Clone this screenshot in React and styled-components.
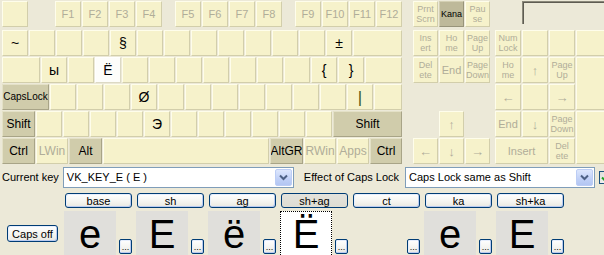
import React from "react";
import styled, { createGlobalStyle } from "styled-components";

const GlobalStyle = createGlobalStyle`
  html, body {
    margin: 0;
    padding: 0;
  }
  body {
    background: #ece9d8;
    overflow: hidden;
    font-family: "Liberation Sans", Arial, sans-serif;
  }
`;

const Page = styled.div`
  width: 604px;
  height: 255px;
  overflow: hidden;
  background: #ece9d8;
`;

const Keyboard = styled.div`
  display: flex;
  padding: 1px 0 0 2px;
`;

const Block = styled.div`
  display: flex;
  flex-direction: column;
  gap: 1px;
  flex: none;
  margin-left: ${p => p.$ml || 0}px;
`;

const KeyRow = styled.div`
  display: flex;
  gap: 1px;
  height: 26px;
  margin-bottom: ${p => p.$mb || 0}px;
`;

const tones = {
  light: { bg: "#f6f2cb", hi: "#fefdeb", lo: "#d2ceab" },
  dark: { bg: "#d0ccab", hi: "#e4e1c7", lo: "#a8a487" },
  kana: { bg: "#beb99a", hi: "#d4d0b4", lo: "#98947a" },
  sel: { bg: "#fdfdfa", hi: "#ffffff", lo: "#dcd9c4" },
};

const Key = styled.div`
  box-sizing: border-box;
  flex: none;
  width: ${p => p.$w || 26}px;
  height: ${p => p.$h || 26}px;
  margin-left: ${p => p.$ml || 0}px;
  grid-column: ${p => p.$col || "auto"};
  grid-row: ${p => p.$row || "auto"};
  display: flex;
  align-items: center;
  justify-content: center;
  text-align: center;
  white-space: pre-line;
  overflow: hidden;
  background: ${p => tones[p.$tone || "light"].bg};
  border: 1px solid;
  border-color: ${p => tones[p.$tone || "light"].hi} ${p => tones[p.$tone || "light"].lo}
    ${p => tones[p.$tone || "light"].lo} ${p => tones[p.$tone || "light"].hi};
  color: ${p => (p.$muted ? "#b0ad99" : p.$ink || "#000")};
  font-size: ${p => p.$fs || 14}px;
  line-height: ${p => (p.$lh ? p.$lh + "px" : 1)};
`;

const NavGrid = styled.div`
  display: grid;
  grid-template-columns: repeat(3, 25px);
  grid-template-rows: repeat(5, 26px);
  gap: 1px;
`;

const NumGrid = styled.div`
  display: grid;
  grid-template-columns: 26px 26px 26px 30px;
  grid-template-rows: repeat(5, 26px);
  gap: 1px;
`;

const Display = styled.div`
  box-sizing: border-box;
  margin-left: 27px;
  width: 84px;
  height: 23px;
  background: #ece9d8;
  border-top: 1px solid #8a887a;
  border-left: 1px solid #8a887a;
  box-shadow: inset 1px 1px 0 #5e5c52;
`;

/* bottom panel */

const Controls = styled.div`
  display: flex;
  align-items: center;
  height: 22px;
  margin-top: 2px;
  font-size: 11px;
  color: #000;
`;

const Label = styled.span`
  white-space: nowrap;
  margin-left: ${p => p.$ml || 0}px;
  margin-right: ${p => p.$mr || 0}px;
`;

const Combo = styled.div`
  box-sizing: border-box;
  flex: none;
  width: ${p => p.$w}px;
  height: 21px;
  border: 1px solid #7f9db9;
  background: #fff;
  display: flex;
  align-items: center;
  padding-left: 3px;
`;

const ComboText = styled.span`
  flex: 1;
  font-size: 11px;
  white-space: nowrap;
`;

const ComboArrow = styled.div`
  box-sizing: border-box;
  width: 17px;
  height: 17px;
  margin-right: 1px;
  border-radius: 2px;
  border: 1px solid #bccdf5;
  background: linear-gradient(#dde7fd, #c0d0f7 60%, #b3c6f3);
  display: flex;
  align-items: center;
  justify-content: center;
`;

const Check = styled.div`
  box-sizing: border-box;
  flex: none;
  width: 13px;
  height: 13px;
  margin-left: 4px;
  border: 1px solid #1c5180;
  background: linear-gradient(135deg, #dcdcd7, #ffffff);
  display: flex;
  align-items: center;
  justify-content: center;
`;

const Bottom = styled.div`
  display: flex;
  margin-top: 5px;
`;

const LeftCol = styled.div`
  box-sizing: border-box;
  flex: none;
  width: 64px;
  padding: 32px 0 0 7px;
`;

const Columns = styled.div`
  display: flex;
  gap: 4px;
`;

const Column = styled.div`
  flex: none;
  width: 68px;
  display: flex;
  flex-direction: column;
`;

const XpButton = styled.div`
  box-sizing: border-box;
  flex: none;
  border: 1px solid #003c74;
  border-radius: 3px;
  background: ${p =>
    p.$pressed
      ? "linear-gradient(#e4e3dc, #dedcd2)"
      : "linear-gradient(#ffffff, #f5f5f1 55%, #e9e8e1)"};
  box-shadow: ${p =>
    p.$pressed ? "none" : "inset -1px -1px 0 #b9cbf0, inset 1px 1px 0 #e6eefd"};
  font-size: 11px;
  color: #000;
  display: flex;
  align-items: center;
  justify-content: center;
  white-space: nowrap;
`;

const ModeButton = styled(XpButton)`
  margin-left: 1px;
  width: 67px;
  height: 15px;
  margin-bottom: 3px;
`;

const CapsButton = styled(XpButton)`
  width: 51px;
  height: 17px;
`;

const CellRow = styled.div`
  display: flex;
  gap: 3px;
  align-items: flex-start;
`;

const Cell = styled.div`
  box-sizing: border-box;
  flex: none;
  width: 52px;
  height: 44px;
  padding-top: 1px;
  background: ${p => (p.$sel ? "#fff" : p.$empty ? "transparent" : "#e0dfdb")};
  border: 1px ${p => (p.$sel ? "dotted #000" : "solid transparent")};
  border-bottom: none;
  font-size: 40px;
  line-height: 42px;
  text-align: center;
  color: #000;
`;

const Dots = styled(XpButton)`
  width: 13px;
  height: 15px;
  margin-top: 28px;
  border-radius: 2px;
  font-size: 9px;
  align-items: flex-end;
  line-height: 9px;
  padding-bottom: 1px;
`;

const fKeys = (names, first) =>
  names.map((n, i) => (
    <Key key={n} $ml={i === 0 ? first : 0} $muted $fs={11}>
      {n}
    </Key>
  ));

const row1 = ["~", "", "", "", "§", "", "", "", "", "", "", "", "±"];
const row2 = ["ы", "", "Ё", "", "", "", "", "", "", "", "{", "}"];
const row3 = ["", "", "", "Ø", "", "", "", "", "", "", "", "|"];
const row4 = ["", "", "", "", "Э", "", "", "", "", "", ""];

const nav = { $muted: true, $fs: 9, $lh: 10 };

const modes = [
  { name: "base", ch: "e" },
  { name: "sh", ch: "E" },
  { name: "ag", ch: "ё" },
  { name: "sh+ag", ch: "Ё", sel: true, pressed: true },
  { name: "ct", ch: "", empty: true },
  { name: "ka", ch: "e" },
  { name: "sh+ka", ch: "E" },
];

const Chevron = () => (
  <svg width="9" height="7" viewBox="0 0 9 7">
    <path d="M1 1.5 L4.5 5 L8 1.5" fill="none" stroke="#4d6185" strokeWidth="2" />
  </svg>
);

export default function App() {
  return (
    <Page>
      <GlobalStyle />
      <Keyboard>
        <Block>
          <KeyRow $mb={2}>
            <Key />
            {fKeys(["F1", "F2", "F3", "F4"], 26)}
            {fKeys(["F5", "F6", "F7", "F8"], 12)}
            {fKeys(["F9", "F10", "F11", "F12"], 12)}
          </KeyRow>
          <KeyRow>
            {row1.map((c, i) => (
              <Key key={i}>{c}</Key>
            ))}
            <Key $w={49} />
          </KeyRow>
          <KeyRow>
            <Key $w={38} />
            {row2.map((c, i) => (
              <Key key={i} $tone={c === "Ё" ? "sel" : "light"}>
                {c}
              </Key>
            ))}
            <Key $w={37} />
          </KeyRow>
          <KeyRow>
            <Key $w={47} $tone="dark" $fs={10}>
              CapsLock
            </Key>
            {row3.map((c, i) => (
              <Key key={i} $ink={c === "|" ? "#3e5a1c" : "#000"} $fs={c === "|" ? 17 : 14}>
                {c}
              </Key>
            ))}
            <Key $w={28} />
          </KeyRow>
          <KeyRow>
            <Key $w={33} $tone="dark" $fs={12}>
              Shift
            </Key>
            {row4.map((c, i) => (
              <Key key={i}>{c}</Key>
            ))}
            <Key $w={69} $tone="dark" $fs={12}>
              Shift
            </Key>
          </KeyRow>
          <KeyRow>
            <Key $w={33} $tone="dark" $fs={12}>Ctrl</Key>
            <Key $w={32} $muted $fs={12}>LWin</Key>
            <Key $w={33} $tone="dark" $fs={12}>Alt</Key>
            <Key $w={166} />
            <Key $w={33} $tone="dark" $fs={12}>AltGR</Key>
            <Key $w={32} $muted $fs={12}>RWin</Key>
            <Key $w={32} $muted $fs={12}>Apps</Key>
            <Key $w={32} $tone="dark" $fs={12}>Ctrl</Key>
          </KeyRow>
        </Block>

        <Block $ml={11}>
          <KeyRow $mb={2}>
            <Key $w={25} {...nav}>{"Prnt\nScrn"}</Key>
            <Key $w={25} $tone="kana" $fs={9}>Kana</Key>
            <Key $w={25} {...nav}>{"Pau\nse"}</Key>
          </KeyRow>
          <NavGrid>
            <Key $w={25} {...nav}>{"Ins\nert"}</Key>
            <Key $w={25} {...nav}>{"Ho\nme"}</Key>
            <Key $w={25} {...nav}>{"Page\nUp"}</Key>
            <Key $w={25} {...nav}>{"Del\nete"}</Key>
            <Key $w={25} $muted $fs={11}>End</Key>
            <Key $w={25} {...nav}>{"Page\nDown"}</Key>
            <Key $w={25} $col="2" $row="4" $muted $fs={13}>↑</Key>
            <Key $w={25} $col="1" $row="5" $muted $fs={13}>←</Key>
            <Key $w={25} $col="2" $row="5" $muted $fs={13}>↓</Key>
            <Key $w={25} $col="3" $row="5" $muted $fs={13}>→</Key>
          </NavGrid>
        </Block>

        <Block $ml={5}>
          <KeyRow $mb={2}>
            <Display />
          </KeyRow>
          <NumGrid>
            <Key {...nav}>{"Num\nLock"}</Key>
            <Key />
            <Key />
            <Key $w={30} />
            <Key {...nav}>{"Ho\nme"}</Key>
            <Key $muted $fs={13}>↑</Key>
            <Key {...nav}>{"Page\nUp"}</Key>
            <Key $w={30} $h={53} $col="4" $row="2 / span 2" />
            <Key $muted $fs={13}>←</Key>
            <Key />
            <Key $muted $fs={13}>→</Key>
            <Key $muted $fs={11}>End</Key>
            <Key $muted $fs={13}>↓</Key>
            <Key {...nav}>{"Page\nDown"}</Key>
            <Key $w={30} $h={53} $col="4" $row="4 / span 2" />
            <Key $w={53} $col="1 / span 2" $row="5" $muted $fs={11}>Insert</Key>
            <Key $col="3" $row="5" {...nav}>{"Del\nete"}</Key>
          </NumGrid>
        </Block>
      </Keyboard>

      <Controls>
        <Label $ml={2} $mr={4}>Current key</Label>
        <Combo $w={231}>
          <ComboText>VK_KEY_E ( E )</ComboText>
          <ComboArrow>
            <Chevron />
          </ComboArrow>
        </Combo>
        <Label $ml={10} $mr={6}>Effect of Caps Lock</Label>
        <Combo $w={190}>
          <ComboText>Caps Lock same as Shift</ComboText>
          <ComboArrow>
            <Chevron />
          </ComboArrow>
        </Combo>
        <Check>
          <svg width="9" height="9" viewBox="0 0 9 9">
            <path d="M1 4.5 L3.5 7 L8 2" fill="none" stroke="#21a121" strokeWidth="2" />
          </svg>
        </Check>
      </Controls>

      <Bottom>
        <LeftCol>
          <CapsButton>Caps off</CapsButton>
        </LeftCol>
        <Columns>
          {modes.map(m => (
            <Column key={m.name}>
              <ModeButton $pressed={m.pressed}>{m.name}</ModeButton>
              <CellRow>
                <Cell $sel={m.sel} $empty={m.empty}>
                  {m.ch}
                </Cell>
                <Dots>...</Dots>
              </CellRow>
            </Column>
          ))}
        </Columns>
      </Bottom>
    </Page>
  );
}
